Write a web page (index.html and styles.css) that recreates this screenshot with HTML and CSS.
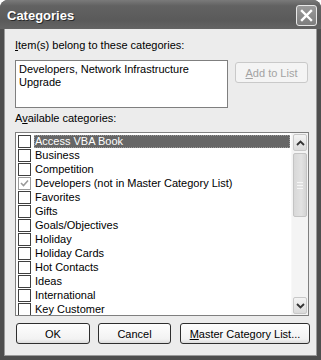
FILE: index.html
```html
<!DOCTYPE html>
<html>
<head>
    <meta charset="UTF-8">
    <title>Categories</title>
    <link rel="stylesheet" href="styles.css">
</head>
<body>
    <div class="window">
        <div class="title-bar">
            <span class="title">Categories</span>
            <div class="close-btn">
                <svg width="13" height="13" viewBox="0 0 13 13">
                    <path d="M2 2 L11 11 M11 2 L2 11" stroke="#fff" stroke-width="2.4" stroke-linecap="square"/>
                </svg>
            </div>
        </div>
        <div class="client">
            <div class="label"><u>I</u>tem(s) belong to these categories:</div>
            <div class="top-row">
                <div class="items-box">Developers, Network Infrastructure Upgrade</div>
                <button class="btn disabled add-btn"><u>A</u>dd to List</button>
            </div>
            <div class="label avail-label">A<u>v</u>ailable categories:</div>
            <div class="list">
                <ul class="rows">
                    <li class="row selected"><span class="check"></span><span class="name">Access VBA Book</span></li>
                    <li class="row"><span class="check"></span><span class="name">Business</span></li>
                    <li class="row"><span class="check"></span><span class="name">Competition</span></li>
                    <li class="row"><span class="check checked">
                        <svg width="11" height="11" viewBox="0 0 11 11"><path d="M2 5 L4.5 7.5 L9 2.5" fill="none" stroke="#9a9a9a" stroke-width="1.6"/></svg>
                    </span><span class="name">Developers (not in Master Category List)</span></li>
                    <li class="row"><span class="check"></span><span class="name">Favorites</span></li>
                    <li class="row"><span class="check"></span><span class="name">Gifts</span></li>
                    <li class="row"><span class="check"></span><span class="name">Goals/Objectives</span></li>
                    <li class="row"><span class="check"></span><span class="name">Holiday</span></li>
                    <li class="row"><span class="check"></span><span class="name">Holiday Cards</span></li>
                    <li class="row"><span class="check"></span><span class="name">Hot Contacts</span></li>
                    <li class="row"><span class="check"></span><span class="name">Ideas</span></li>
                    <li class="row"><span class="check"></span><span class="name">International</span></li>
                    <li class="row"><span class="check"></span><span class="name">Key Customer</span></li>
                </ul>
                <div class="scrollbar">
                    <div class="sb-btn">
                        <svg width="9" height="6" viewBox="0 0 9 6"><path d="M1 5 L4.5 1.5 L8 5" fill="none" stroke="#333" stroke-width="1.8"/></svg>
                    </div>
                    <div class="sb-track">
                        <div class="sb-thumb"><span class="grip"></span></div>
                    </div>
                    <div class="sb-btn">
                        <svg width="9" height="6" viewBox="0 0 9 6"><path d="M1 1 L4.5 4.5 L8 1" fill="none" stroke="#333" stroke-width="1.8"/></svg>
                    </div>
                </div>
            </div>
            <div class="bottom-row">
                <button class="btn ok-btn">OK</button>
                <button class="btn cancel-btn">Cancel</button>
                <button class="btn master-btn"><u>M</u>aster Category List...</button>
            </div>
        </div>
    </div>
</body>
</html>
```

FILE: styles.css
```css
body {
    margin: 0;
    background: #fff;
    font-family: "Liberation Sans", Arial, sans-serif;
    font-size: 11px;
    color: #000;
}

.window {
    width: 321px;
    height: 360px;
    box-sizing: border-box;
    background: #4e4e4e;
    border-radius: 8px 8px 0 0;
    display: flex;
    flex-direction: column;
}

.title-bar {
    height: 29px;
    flex-shrink: 0;
    display: flex;
    align-items: center;
    justify-content: space-between;
    padding: 0 4px 0 7px;
    border-radius: 8px 8px 0 0;
    background: linear-gradient(#7a7a7a, #626262 20%, #5a5a5a 70%, #646464);
}

.title {
    color: #fff;
    font-weight: bold;
    font-size: 13px;
    text-shadow: 1px 1px 0 #2a2a2a;
    margin-top: 2px;
}

.close-btn {
    width: 19px;
    height: 19px;
    border: 1px solid #e8e8e8;
    border-radius: 3px;
    background: linear-gradient(#9a9a9a, #7e7e7e);
    display: flex;
    align-items: center;
    justify-content: center;
    margin-top: 1px;
}

.client {
    flex: 1;
    margin: 0 4px 4px 4px;
    background: #ececec;
    padding: 10px 0 0 10px;
    border-left: 1px solid #9a9a9a;
    border-right: 1px solid #9a9a9a;
    border-bottom: 1px solid #9a9a9a;
    box-sizing: border-box;
}

.label {
    line-height: 13px;
    height: 13px;
}

.top-row {
    display: flex;
    align-items: flex-start;
    gap: 7px;
    margin-top: 8px;
}

.items-box {
    width: 213px;
    height: 48px;
    box-sizing: border-box;
    border: 1px solid #7f7f7f;
    background: #fff;
    padding: 2px 3px;
    line-height: 13px;
}

.btn {
    height: 21px;
    box-sizing: border-box;
    border: 1px solid #2e2e2e;
    border-radius: 3px;
    background: linear-gradient(#fefefe, #f2f2f2 80%, #dcdcdc);
    font-family: "Liberation Sans", Arial, sans-serif;
    font-size: 11px;
    color: #000;
    padding: 0;
}

.btn.disabled {
    border-color: #c9c9c9;
    background: #f4f4f4;
    color: #a3a3a3;
}

.add-btn {
    width: 73px;
    margin-top: 2px;
}

.avail-label {
    margin-top: 4px;
}

.list {
    margin-top: 7px;
    width: 294px;
    height: 184px;
    box-sizing: border-box;
    border: 1px solid #7f7f7f;
    background: #fff;
    display: flex;
}

.rows {
    list-style: none;
    margin: 0;
    padding: 1px 0 0 2px;
    flex: 1;
    overflow: hidden;
}

.row {
    height: 14px;
    display: flex;
    align-items: center;
}

.check {
    width: 13px;
    height: 13px;
    box-sizing: border-box;
    border: 1px solid #3f3f3f;
    background: #fff;
    flex-shrink: 0;
    display: flex;
    align-items: center;
    justify-content: center;
}

.check.checked {
    border-color: #9a9a9a;
}

.name {
    margin-left: 3px;
    padding: 0 1px;
    line-height: 13px;
    white-space: nowrap;
}

.row.selected .name {
    flex: 1;
    background: #666;
    color: #fff;
    outline: 1px dotted #9a9a9a;
    outline-offset: -1px;
    margin-right: 1px;
}

.scrollbar {
    width: 17px;
    flex-shrink: 0;
    background: #f4f4f4;
    border-left: 1px solid #f8f8f8;
    display: flex;
    flex-direction: column;
    padding: 1px 0;
    box-sizing: border-box;
}

.sb-btn {
    height: 15px;
    border: 1px solid #c8c8c8;
    border-radius: 2px;
    background: linear-gradient(#f4f4f4, #dadada);
    display: flex;
    align-items: center;
    justify-content: center;
    margin: 0 1px;
}

.sb-track {
    flex: 1;
    padding: 2px 1px 0;
}

.sb-thumb {
    height: 62px;
    border: 1px solid #c4c4c4;
    border-radius: 2px;
    background: linear-gradient(90deg, #d8d8d8, #e2e2e2 60%, #d4d4d4);
    display: flex;
    align-items: center;
    justify-content: center;
}

.grip {
    width: 6px;
    height: 5px;
    border-top: 1px solid #f6f6f6;
    border-bottom: 1px solid #f6f6f6;
    background: linear-gradient(transparent 40%, #f6f6f6 40%, #f6f6f6 60%, transparent 60%);
}

.bottom-row {
    display: flex;
    margin-top: 7px;
    margin-left: 1px;
}

.ok-btn {
    width: 74px;
}

.cancel-btn {
    width: 73px;
    margin-left: 8px;
}

.master-btn {
    width: 130px;
    margin-left: 9px;
}
```
